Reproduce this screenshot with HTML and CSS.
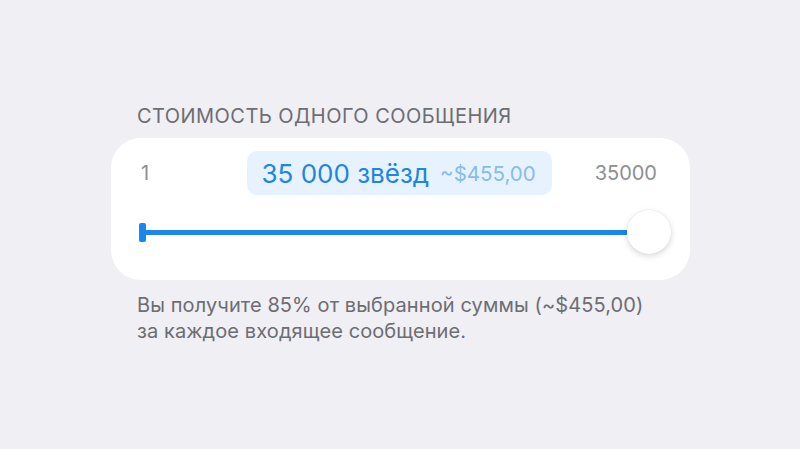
FILE: index.html
```html
<!DOCTYPE html>
<html lang="ru">
<head>
<meta charset="utf-8">
<link rel="stylesheet" href="styles.css">
</head>
<body>
<div class="section">
  <div class="title">СТОИМОСТЬ ОДНОГО СООБЩЕНИЯ</div>
  <div class="card">
    <div class="top">
      <span class="limit min">1</span>
      <div class="pill"><span class="stars">35 000 звёзд</span><span class="usd">~$455,00</span></div>
      <span class="limit max">35000</span>
    </div>
    <div class="slider">
      <span class="tick"></span>
      <span class="track"></span>
      <span class="knob"></span>
    </div>
  </div>
  <div class="note">Вы получите 85% от выбранной суммы (~$455,00)<br>за каждое входящее сообщение.</div>
</div>
</body>
</html>
```
FILE: styles.css
```css
html, body {
  margin: 0;
  padding: 0;
  background: #efeff4;
  font-family: Inter, Roboto, "Noto Sans", "Liberation Sans", sans-serif;
}
.section {
  width: 579px;
  margin-left: 111px;
  padding-top: 103px;
}
.title {
  margin-left: 26px;
  font-size: 20px;
  line-height: 26px;
  letter-spacing: 0.45px;
  color: #6d6d72;
  margin-bottom: 9px;
}
.card {
  background: #fff;
  border-radius: 30px;
  height: 142px;
  box-sizing: border-box;
  padding-top: 13px;
}
.top {
  display: grid;
  grid-template-columns: 1fr auto 1fr;
  align-items: center;
  padding: 0 33px 0 30px;
  height: 44px;
}
.limit {
  font-size: 20px;
  color: #8e8e93;
}
.max { justify-self: end; }
.pill {
  background: #e6f2fd;
  border-radius: 10px;
  height: 44px;
  width: 305px;
  box-sizing: border-box;
  display: flex;
  align-items: center;
  padding-left: 15px;
  gap: 11px;
}
.stars {
  font-size: 26px;
  color: #1d85e4;
}
.usd {
  font-size: 20.5px;
  color: #86bcee;
}
.slider {
  display: flex;
  align-items: center;
  margin-top: 14px;
  height: 46px;
  padding: 0 19px 0 28px;
}
.tick {
  width: 7px;
  height: 19px;
  border-radius: 2px;
  background: #1a86ee;
}
.track {
  flex: 1;
  height: 5px;
  background: #1a86ee;
}
.knob {
  width: 44px;
  height: 44px;
  border-radius: 50%;
  background: #fff;
  box-shadow: 0 2px 6px rgba(0,0,0,0.16), 0 0 0 0.5px rgba(0,0,0,0.05);
}
.note {
  margin-left: 26px;
  margin-top: 12px;
  font-size: 20px;
  line-height: 26px;
  letter-spacing: 0.1px;
  color: #6d6d72;
}
```
